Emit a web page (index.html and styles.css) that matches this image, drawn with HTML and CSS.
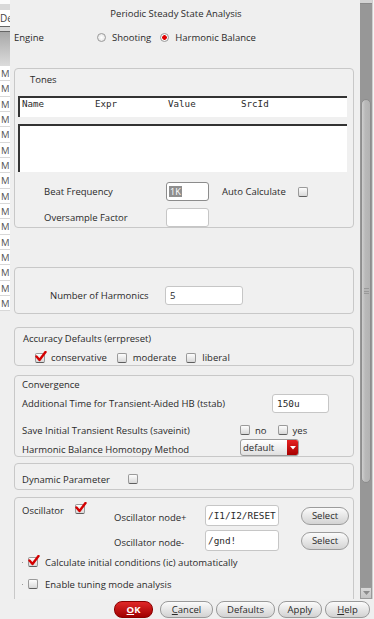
FILE: index.html
```html
<!DOCTYPE html>
<html lang="en">
<head>
    <meta charset="UTF-8">
    <meta name="viewport" content="width=device-width, initial-scale=1.0">
    <title>Periodic Steady State Analysis</title>
    <link rel="stylesheet" href="styles.css">
</head>
<body>

<div class="screen">
    <!-- ventana de detras, solo asoma una tira -->
    <aside class="behind">
        <div class="behind-top"></div>
        <div class="behind-tab">De</div>
        <div class="behind-rule"></div>
        <div class="behind-head"></div>
        <ul class="behind-list">
            <li>M</li><li>M</li><li>M</li><li>M</li>
            <li>M</li><li>M</li><li>M</li><li>M</li>
            <li>M</li><li>M</li><li>M</li><li>M</li>
            <li>M</li><li>M</li><li>M</li><li>M</li>
        </ul>
    </aside>

    <div class="dialog">
        <div class="scroll">
            <main class="form">
                <div class="title">Periodic Steady State Analysis</div>

                <div class="engine">
                    <span class="engine-label">Engine</span>
                    <label class="radio"><span class="dot"></span>Shooting</label>
                    <label class="radio on"><span class="dot"></span>Harmonic Balance</label>
                </div>

                <section class="group tones">
                    <div class="group-title">Tones</div>
                    <div class="table-head">
                        <span>Name</span><span>Expr</span><span>Value</span><span>SrcId</span>
                    </div>
                    <div class="table-body"></div>
                    <div class="field-row beat">
                        <span class="field-label">Beat Frequency</span>
                        <span class="input small focus"><span class="sel">1K</span></span>
                        <span class="auto-label">Auto Calculate</span>
                        <span class="check"></span>
                    </div>
                    <div class="field-row over">
                        <span class="field-label">Oversample Factor</span>
                        <span class="input small"></span>
                    </div>
                </section>

                <section class="group harmonics">
                    <div class="field-row">
                        <span class="harm-label">Number of Harmonics</span>
                        <span class="input harm">5</span>
                    </div>
                </section>

                <section class="group accuracy">
                    <div class="row-title">Accuracy Defaults (errpreset)</div>
                    <div class="check-row">
                        <span class="check on"><svg width="12" height="11" viewBox="0 0 12 11"><path d="M1.5 5.5 L4.5 9 L10.5 1" fill="none" stroke="#d40000" stroke-width="2.4" stroke-linecap="round" stroke-linejoin="round"/></svg></span>
                        <span class="opt">conservative</span>
                        <span class="check"></span>
                        <span class="opt">moderate</span>
                        <span class="check"></span>
                        <span class="opt">liberal</span>
                    </div>
                </section>

                <section class="group convergence">
                    <div class="conv-title">Convergence</div>
                    <div class="conv-row tstab">
                        <span class="conv-label wide">Additional Time for Transient-Aided HB (tstab)</span>
                        <span class="input mono tstab-input">150u</span>
                    </div>
                    <div class="conv-row saveinit">
                        <span class="conv-label">Save Initial Transient Results (saveinit)</span>
                        <span class="check"></span>
                        <span class="opt">no</span>
                        <span class="check"></span>
                        <span class="opt">yes</span>
                    </div>
                    <div class="conv-row homotopy">
                        <span class="conv-label low">Harmonic Balance Homotopy Method</span>
                        <span class="combo">
                            <span class="combo-text">default</span>
                            <span class="combo-arrow"><svg width="6" height="4" viewBox="0 0 6 4"><path d="M0 0 L6 0 L3 3.5 Z" fill="#fff"/></svg></span>
                        </span>
                    </div>
                </section>

                <section class="group dynamic">
                    <div class="dyn-row">
                        <span class="dyn-label">Dynamic Parameter</span>
                        <span class="check"></span>
                    </div>
                </section>

                <section class="group osc">
                    <div class="osc-top">
                        <div class="osc-head">
                            <span class="osc-name">Oscillator</span>
                            <span class="check on"><svg width="12" height="11" viewBox="0 0 12 11"><path d="M1.5 5.5 L4.5 9 L10.5 1" fill="none" stroke="#d40000" stroke-width="2.4" stroke-linecap="round" stroke-linejoin="round"/></svg></span>
                        </div>
                        <div class="osc-grid">
                            <span class="osc-label">Oscillator node+</span>
                            <span class="input mono node">/I1/I2/RESET</span>
                            <button class="pill">Select</button>
                            <span class="osc-label">Oscillator node-</span>
                            <span class="input mono node">/gnd!</span>
                            <button class="pill">Select</button>
                        </div>
                    </div>
                    <div class="tree-row calc">
                        <span class="tree-dot"></span>
                        <span class="check on"><svg width="12" height="11" viewBox="0 0 12 11"><path d="M1.5 5.5 L4.5 9 L10.5 1" fill="none" stroke="#d40000" stroke-width="2.4" stroke-linecap="round" stroke-linejoin="round"/></svg></span>
                        <span class="tree-text">Calculate initial conditions (ic) automatically</span>
                    </div>
                    <div class="tree-row tune">
                        <span class="tree-dot"></span>
                        <span class="check"></span>
                        <span class="tree-text">Enable tuning mode analysis</span>
                    </div>
                </section>
            </main>

            <div class="scrollbar">
                <div class="sb-up"></div>
                <div class="sb-track">
                    <div class="sb-thumb"><span class="grip"></span></div>
                </div>
                <div class="sb-down"><svg width="7" height="4" viewBox="0 0 7 4"><path d="M0 0 L7 0 L3.5 4 Z" fill="#8c8c8c"/></svg></div>
            </div>
            <div class="sliver"></div>
        </div>

        <footer class="buttons">
            <button class="btn ok"><u>O</u>K</button>
            <button class="btn cancel"><u>C</u>ancel</button>
            <button class="btn defaults">Defaults</button>
            <button class="btn apply">Apply</button>
            <button class="btn help"><u>H</u>elp</button>
        </footer>
    </div>
</div>

</body>
</html>
```

FILE: styles.css
```css
* {
    box-sizing: border-box;
}

html, body {
    margin: 0;
    padding: 0;
}

body {
    width: 374px;
    height: 619px;
    overflow: hidden;
    background: #efefef;
    font-family: "Open Sans", "Noto Sans", sans-serif;
    font-size: 9.5px;
    color: #2a2a2a;
}

.screen {
    display: flex;
    height: 619px;
}

/* tira de la ventana de atras */
.behind {
    width: 10px;
    flex: none;
    display: flex;
    flex-direction: column;
    overflow: hidden;
}

.behind-top {
    height: 10px;
    background: linear-gradient(#fbfbfb 0 4px, #d9d9d9 4px);
}

.behind-tab {
    height: 16px;
    background: #fff;
    font-size: 10px;
    line-height: 16px;
    color: #444;
    white-space: nowrap;
}

.behind-rule {
    height: 6px;
    border-top: 1px solid #666;
    border-bottom: 1px solid #666;
    background: #dadada;
}

.behind-head {
    height: 34px;
    background: linear-gradient(#a8a8a8, #dcdcdc);
}

.behind-list {
    list-style: none;
    margin: 0;
    padding: 0;
    display: grid;
    grid-auto-rows: 15.33px;
    background: #fff;
}

.behind-list li {
    border-bottom: 1px solid #d8d8d8;
    line-height: 15px;
    color: #555;
    padding-left: 1px;
}

/* dialogo */
.dialog {
    flex: 1;
    min-width: 0;
    display: flex;
    flex-direction: column;
}

.scroll {
    height: 599px;
    display: flex;
    overflow: hidden;
}

.form {
    flex: 1;
    min-width: 0;
    display: flex;
    flex-direction: column;
    padding: 0 6px 0 4px;
    overflow: hidden;
}

.form > * {
    flex: none;
}

.title {
    height: 28px;
    line-height: 28px;
    text-align: center;
    padding-right: 16px;
}

.engine {
    height: 18px;
    display: flex;
    align-items: center;
}

.engine-label {
    width: 83px;
}

.radio {
    display: flex;
    align-items: center;
    margin-right: 9px;
}

.dot {
    width: 9px;
    height: 9px;
    border-radius: 50%;
    border: 1px solid #9a9a9a;
    background: radial-gradient(#ffffff, #dedede);
    margin-right: 6px;
}

.radio.on .dot {
    background: radial-gradient(circle, #e00000 0 2px, #ffffff 2.6px, #e4e4e4);
}

.group {
    border: 1px solid #c8c8c8;
    border-radius: 4px;
    background: #f0f0f0;
}

/* Tones */
.tones {
    margin-top: 22px;
    height: 160px;
}

.group-title {
    height: 21px;
    line-height: 21px;
    padding-left: 15px;
}

.table-head, .table-body {
    margin: 0 6px 0 3px;
    background: #fff;
    border-top: 2px solid #333;
    border-left: 2px solid #333;
}

.table-head {
    margin-top: 6px;
    height: 21px;
    display: flex;
    padding-left: 2px;
    font-family: "DejaVu Sans Mono", monospace;
    font-size: 9.2px;
    line-height: 12px;
}

.table-head span {
    width: 73px;
}

.table-body {
    margin-top: 7px;
    height: 48px;
}

.field-row {
    display: flex;
    align-items: center;
    height: 19px;
    padding-left: 29px;
}

.beat {
    margin-top: 10px;
}

.over {
    margin-top: 7px;
}

.field-label {
    width: 122px;
}

.input {
    height: 19px;
    background: #fff;
    border: 1px solid #c6c6c6;
    border-radius: 3px;
    display: flex;
    align-items: center;
    padding-left: 4px;
    flex: none;
}

.input.small {
    width: 43px;
}

.input.focus {
    border-color: #8c8c8c;
    padding-left: 2px;
}

.sel {
    background: #8f8f8f;
    color: #fff;
    font-size: 9px;
    line-height: 11px;
    padding: 0 1px;
}

.mono {
    font-family: "DejaVu Sans Mono", monospace;
    font-size: 9.4px;
}

.auto-label {
    margin-left: 13px;
    width: 76px;
}

.check {
    width: 10px;
    height: 10px;
    flex: none;
    position: relative;
    border: 1px solid #9a9a9a;
    border-bottom-color: #5e5e5e;
    border-radius: 2px;
    background: linear-gradient(#fdfdfd, #d8d8d8);
}

.check svg {
    position: absolute;
    left: -1px;
    top: -3px;
}

/* Harmonics */
.harmonics {
    margin-top: 39px;
    padding: 18px 0 8px 35px;
}

.harmonics .field-row {
    padding-left: 0;
}

.harm-label {
    width: 115px;
}

.input.harm {
    width: 78px;
}

/* Accuracy */
.accuracy {
    margin-top: 13px;
    padding-left: 8px;
}

.row-title {
    height: 22px;
    line-height: 22px;
}

.check-row {
    height: 15px;
    display: flex;
    align-items: center;
    padding-left: 12px;
}

.opt {
    margin-left: 6px;
    margin-right: 10px;
}

/* Convergence */
.convergence {
    margin-top: 9px;
    padding-left: 7px;
}

.conv-title {
    height: 18px;
    line-height: 18px;
}

.conv-row {
    display: flex;
    align-items: center;
}

.tstab {
    height: 19px;
}

.saveinit {
    height: 18px;
    margin-top: 8px;
}

.homotopy {
    height: 17px;
}

.conv-label {
    width: 218px;
}

.conv-label.wide {
    width: 250px;
}

.conv-label.low {
    padding-top: 4px;
}

.saveinit .opt {
    margin-left: 5px;
    margin-right: 11px;
}

.tstab-input {
    width: 57px;
}

.combo {
    width: 59px;
    height: 17px;
    display: flex;
    border: 1px solid #9c9c9c;
    border-radius: 3px;
    overflow: hidden;
    background: linear-gradient(#ffffff, #e0e0e0);
}

.combo-text {
    flex: 1;
    line-height: 15px;
    padding-left: 2px;
}

.combo-arrow {
    width: 11px;
    display: flex;
    align-items: center;
    justify-content: center;
    background: linear-gradient(#e52222, #a80000);
}

/* Dynamic */
.dynamic {
    margin-top: 6px;
    padding: 6px 0 1px 7px;
}

.dyn-row {
    height: 18px;
    display: flex;
    align-items: center;
}

.dyn-label {
    width: 106px;
}

/* Oscillator */
.osc {
    margin-top: 7px;
    height: 130px;
    padding: 7px 0 0 7px;
}

.osc-top {
    display: flex;
}

.osc-head {
    width: 92px;
    flex: none;
    display: flex;
    align-items: flex-start;
}

.osc-name {
    width: 53px;
    line-height: 11px;
}

.osc-head .check {
    margin-top: -1px;
}

.osc-grid {
    display: grid;
    grid-template-columns: 91px 96px 48px;
    grid-auto-rows: 21px;
    row-gap: 4px;
    align-items: center;
}

.osc-label {
    padding-top: 3px;
}

.input.node {
    width: 74px;
    height: 21px;
    padding-left: 2px;
}

.pill {
    height: 18px;
    width: 48px;
    padding: 0;
    border: 1px solid #9c9c9c;
    border-radius: 9px;
    background: linear-gradient(#fbfbfb, #d3d3d3);
    font: inherit;
    color: #2a2a2a;
}

.tree-row {
    height: 16px;
    display: flex;
    align-items: center;
}

.calc {
    margin-top: 3px;
}

.tune {
    margin-top: 6px;
}

.tree-dot {
    width: 1px;
    height: 1px;
    background: #999;
    margin-right: 5px;
}

.tree-row .check {
    margin-right: 7px;
}

/* barra de scroll */
.scrollbar {
    width: 12px;
    flex: none;
    display: flex;
    flex-direction: column;
    background: #979797;
}

.sb-up {
    height: 4px;
    background: #d4d4d4;
    border-bottom: 1px solid #8a8a8a;
}

.sb-track {
    flex: 1;
    padding: 95px 1px 0 1px;
}

.sb-thumb {
    height: 384px;
    border-radius: 5px;
    background: linear-gradient(90deg, #cfcfcf, #b9b9b9 40%, #b3b3b3);
    border: 1px solid #8d8d8d;
    display: flex;
    align-items: center;
    justify-content: center;
}

.grip {
    width: 5px;
    height: 6px;
    border-top: 1px solid #999;
    border-bottom: 1px solid #999;
    background: linear-gradient(#b5b5b5 2px, #999 2px 3px, #b5b5b5 3px);
}

.sb-down {
    height: 12px;
    background: linear-gradient(#d9d9d9, #c4c4c4);
    border: 1px solid #9a9a9a;
    display: flex;
    align-items: center;
    justify-content: center;
}

.sliver {
    width: 2px;
    flex: none;
    background: #f3f3f3;
    border-left: 1px solid #cfcfcf;
}

/* botones de abajo */
.buttons {
    height: 20px;
    display: flex;
    justify-content: flex-end;
    gap: 3px;
    padding: 2px 4px 0 0;
}

.btn {
    height: 17px;
    padding: 0;
    border: 1px solid #9a9a9a;
    border-radius: 8px;
    background: linear-gradient(#fbfbfb, #d2d2d2);
    font: inherit;
    color: #2a2a2a;
}

.btn u {
    text-decoration-thickness: 1px;
}

.ok {
    width: 39px;
    margin-right: 4px;
    border-color: #8a0000;
    background: linear-gradient(#e02828, #a00000);
    color: #fff;
    font-weight: bold;
}

.cancel {
    width: 53px;
}

.defaults {
    width: 59px;
}

.apply {
    width: 44px;
}

.help {
    width: 45px;
}
```
